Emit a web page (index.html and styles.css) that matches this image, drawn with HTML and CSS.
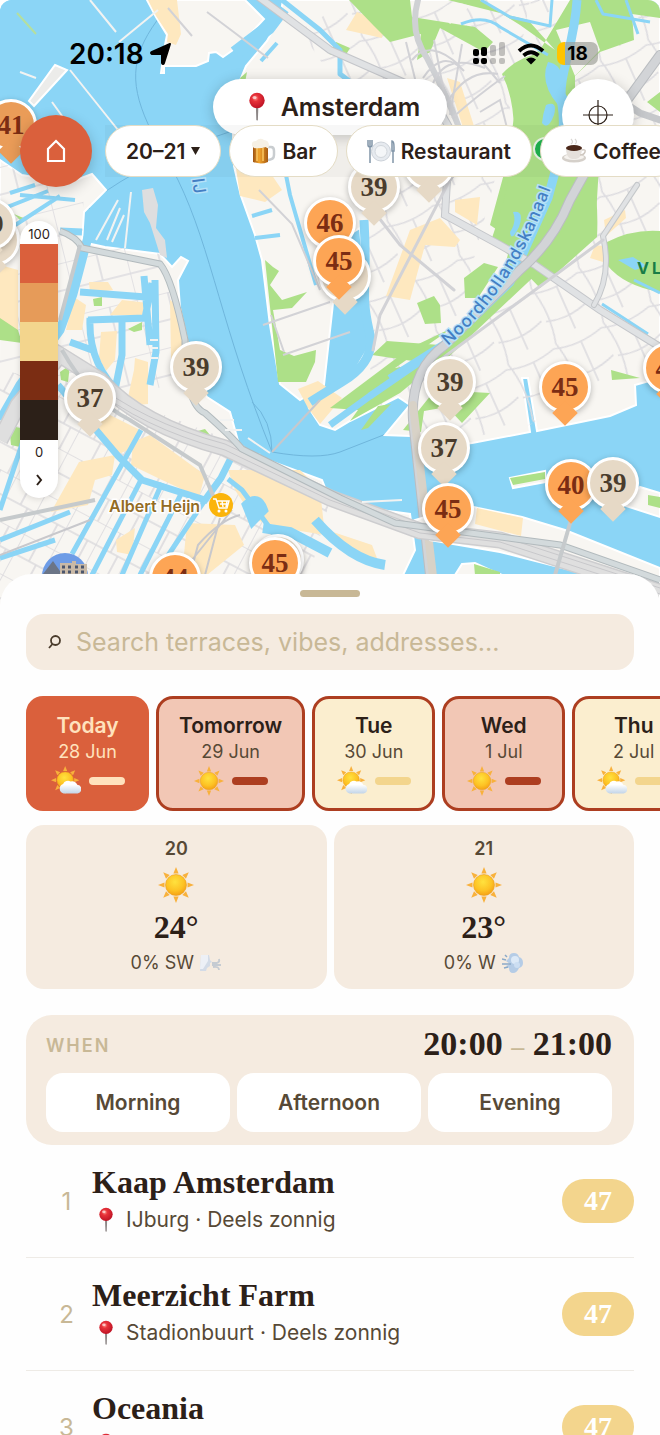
FILE: index.html
```html
<!DOCTYPE html>
<html lang="en">
<head>
<meta charset="utf-8">
<meta name="viewport" content="width=device-width, initial-scale=1">
<title>Terraces in Amsterdam</title>
<link rel="stylesheet" href="styles.css">
</head>
<body>
<svg class="defs" aria-hidden="true">
  <defs>
    <radialGradient id="sunFill" cx=".45" cy=".35" r=".7"><stop offset="0" stop-color="#ffe23e"/><stop offset=".6" stop-color="#fdc224"/><stop offset="1" stop-color="#f39a12"/></radialGradient>
    <linearGradient id="cloudFill" x1="0" y1="0" x2="0" y2="1"><stop offset=".3" stop-color="#fff"/><stop offset="1" stop-color="#c3d5e8"/></linearGradient>
    <radialGradient id="redFill" cx=".4" cy=".35" r=".7"><stop offset="0" stop-color="#ff9a90"/><stop offset=".3" stop-color="#e8333a"/><stop offset="1" stop-color="#b90f22"/></radialGradient>
    <linearGradient id="beerFill" x1="0" y1="0" x2="1" y2="0"><stop offset="0" stop-color="#9c5212"/><stop offset=".4" stop-color="#f3a52c"/><stop offset="1" stop-color="#a65a12"/></linearGradient>
    <symbol id="sun" viewBox="0 0 36 36">
      <g fill="#f8b13c"><path id="ray" d="M18 0l2.600 6.500h-5.200z"/><use href="#ray" transform="rotate(45 18 18)"/><use href="#ray" transform="rotate(90 18 18)"/><use href="#ray" transform="rotate(135 18 18)"/><use href="#ray" transform="rotate(180 18 18)"/><use href="#ray" transform="rotate(225 18 18)"/><use href="#ray" transform="rotate(270 18 18)"/><use href="#ray" transform="rotate(315 18 18)"/></g>
      <circle cx="18" cy="18" r="10.500" fill="url(#sunFill)" stroke="#eda01c" stroke-width=".6"/>
    </symbol>
    <symbol id="partly" viewBox="0 0 36 36">
      <use href="#sun" width="34" height="34"/>
      <path d="M15 33a6 6 0 0 1-.5-11.500 6.500 6.500 0 0 1 9-3 7 7 0 0 1 8 4 5.300 5.300 0 0 1 .5 10.500z" fill="url(#cloudFill)"/>
    </symbol>
    <symbol id="pushpin" viewBox="0 0 20 30">
      <path d="M8.800 13h2.600l-.5 14.500-.8 1.500-.8-1.500z" fill="#8d8787"/>
      <circle cx="10" cy="8.500" r="7.700" fill="url(#redFill)"/><ellipse cx="7.500" cy="5.500" rx="2" ry="1.500" fill="#fff" opacity=".6"/>
    </symbol>
  </defs>
</svg>
<div class="app">
  <section class="map" aria-label="Map of Amsterdam">
    <svg class="map-art" viewBox="0 0 660 610" preserveAspectRatio="xMidYMin slice" aria-hidden="true">
      <defs>
        <pattern id="blocksA" width="34" height="46" patternUnits="userSpaceOnUse" patternTransform="rotate(28)"><path d="M0 0v46M17 0v22M0 22h34M0 0h34M25 22v24" stroke="#dbdadd" stroke-width="1.600" fill="none"/></pattern>
        <pattern id="blocksB" width="52" height="60" patternUnits="userSpaceOnUse" patternTransform="rotate(-24)"><path d="M0 4Q24 12 52 4M4 0q8 30 0 60M28 8v46M4 36q24 8 52-4" stroke="#dddce0" stroke-width="1.600" fill="none"/></pattern>
        <pattern id="blocksC" width="60" height="54" patternUnits="userSpaceOnUse" patternTransform="rotate(-14)"><path d="M0 0h60M0 27h60M0 0v54M32 0v27" stroke="#dddce0" stroke-width="1.600" fill="none"/></pattern>
      </defs>
      <rect width="660" height="610" fill="#8bd5f6"/>
      <!-- shipping lanes -->
      <g fill="none" stroke="#6fb6dc" stroke-width="1"><path d="M162 14C132 52 128 80 148 124L178 180C212 250 222 330 272 452M235 130Q170 150 120 182T90 208M272 452Q318 460 340 452L386 434M252 402Q272 420 272 452"/></g>
      <!-- northern land -->
      <g fill="#f8f6f2" stroke="#fff" stroke-width="2">
        <path d="M147 0H245L264 19L240 45L223 57L216 52L209 53L208 61L196 66H164V73H161L165 45L167 35L156 17Z"/>
        <path d="M283 0H660V378L635 385L636 405L610 416L537 431L528 378H522L530 432L472 443L435 448L411 436L385 435L410 405L398 397L350 421L335 430L320 425L309 408L330 396L355 370L370 345L360 228L340 240L324 385L300 400L280 384L270 325L262 260L255 235L241 196L234 166L232 100L246 66L267 41L280 17Z"/>
      </g>
      <path d="M350 0H530L500 160L450 350L375 410L366 330L362 220L340 90L300 30Z" fill="url(#blocksB)"/>
      <path d="M530 0H660V375L600 380L530 425L470 438L435 448L400 395L500 290L560 200Z" fill="url(#blocksB)"/>
      <!-- beige quarters -->
      <g fill="#fee8bf"><path d="M148 0H177L181 34L176 45L167 42L168 34L156 16ZM346 30L357 12L385 23L382 38ZM236 168L265 165L282 190L265 202L240 196ZM447 78L460 82L480 145L467 140ZM455 200L480 197L477 225L455 212ZM410 230L440 218L460 240L455 247L425 245L410 300L386 296Z"/><path d="M298 389L318 381L342 398L320 424L308 408ZM595 245L603 246L603 262L590 258ZM604 220L625 210L626 218L606 236Z"/></g>
      <!-- parks -->
      <g fill="#ade088">
        <path d="M349 0H410L412 17L475 27L493 42L484 52L440 28L430 52L417 60L421 34L390 42L374 26Z"/>
        <path d="M448 0H660V18L632 14L634 40L600 52L575 76L575 100L600 150L596 215L560 252L440 365L372 355L387 341L440 345L498 290L512 240L490 225L505 170L518 95L505 73L540 50L570 0H480L520 25L555 50L528 20Z"/>
        <path d="M502 74Q530 45 555 60L580 130Q600 180 597 237L540 288L492 238Q530 130 502 74ZM607 242Q632 229 660 231V292Q624 286 607 265ZM647 102L660 92V112ZM464 278L484 263L498 267L478 298H465ZM417 303L434 296L440 305L441 323L425 324ZM336 42L350 48L344 58L329 54ZM240 78L247 72L244 88ZM265 260L273 267L279 271L270 285L282 300L307 292L292 308L273 310L280 350L294 356L316 350L315 362L306 382L278 382Z"/>
        <path d="M330 408L410 348L452 328L395 368L440 360L400 393L350 421L358 410ZM361 430L378 406L391 404L368 428ZM403 430L435 390L490 393L462 423L447 407L424 411L421 432ZM611 370L640 378L612 380Z"/>
      </g>
      <path d="M556 30L590 22L600 50L575 76ZM440 12Q450 -2 470 6L450 24Z" fill="#f8f6f2"/>
      <!-- northern canals and ponds -->
      <g fill="none" stroke="#8bd5f6" stroke-linejoin="round">
        <path d="M577 0C574 50 557 75 562 105S558 160 548 198L510 282L447 343L390 379" stroke-width="9"/>
        <path d="M447 343L370 396L330 425" stroke-width="7"/>
        <path d="M283 8L268 28L235 53" stroke-width="14"/><path d="M282 0L320 30L340 50V74L380 104" stroke-width="5"/>
        <path d="M364 220C368 290 360 290 369 330Q378 360 342 382L310 402" stroke-width="9"/>
        <path d="M261 61L277 43M282 155L290 195L316 285M252 216L272 210M255 238L280 235" stroke-width="4"/>
        <path d="M602 304L648 334M634 280L660 293M461 24Q485 14 500 27L548 55M481 0L510 17L550 26L552 0M596 0L603 14L650 22M626 0L638 34" stroke-width="3"/>
      </g>
      <path d="M548 62Q565 65 560 85L568 98L558 105Q539 82 548 62ZM546 105q12-5 8 10-6 16-12 8 1-10 4-18M513 212q12-2 6 15-8 16-9 5 7-10 3-20M618 260l15-3 14 9-12 4Z" fill="#8bd5f6"/>
      <!-- northern roads -->
      <g fill="none" stroke-linecap="round">
        <path d="M252 -8L330 50L430 94L465 155L447 180L445 215L500 245L535 265L600 310L660 347" stroke="#c4c6ca" stroke-width="8"/><path d="M252 -8L330 50L430 94L465 155L447 180L445 215L500 245L535 265L600 310L660 347" stroke="#e0e2e4" stroke-width="6"/>
        <path d="M418 0Q409 32 427 58Q448 98 460 130" stroke="#cfd1d4" stroke-width="6"/>
        <path d="M660 55L620 110L570 200Q553 242 520 270L445 345Q410 370 413 420L430 575" stroke="#babdc1" stroke-width="10"/><path d="M660 55L620 110L570 200Q553 242 520 270L445 345Q410 370 413 420L430 575" stroke="#d2d4d7" stroke-width="8"/>
        <path d="M413 405L434 585" stroke="#d8d2c7" stroke-width="8"/><path d="M660 120L640 113L617 98" stroke="#c6c8cb" stroke-width="7"/>
        <path d="M637 185L603 236Q612 275 594 305" stroke="#c4c7ca" stroke-width="6"/><path d="M637 185L603 236Q612 275 594 305" stroke="#e0e2e4" stroke-width="4"/>
        <path d="M603 240L535 290L440 360M455 170L380 315L373 350M365 200L400 245L454 290" stroke="#d2d2d6" stroke-width="3"/>
      </g>
      <g fill="none" stroke="#d2d2d6" stroke-width="2"><path d="M460 66Q430 38 412 60M464 71Q443 48 423 78M485 68Q440 50 430 93M498 74Q467 68 447 103M505 76Q478 95 452 118M406 42L417 87M434 40L445 98M462 44L450 115M475 54L500 83M480 112L500 100L513 152M207 12L235 33L268 58M168 8L192 36M259 190L292 224L320 290M263 325L330 302M283 355L350 332M271 315L284 352"/></g>
      <!-- western and central land -->
      <g fill="#f8f6f2" stroke="#fff" stroke-width="2">
        <path d="M0 160L22 175L68 183L92 174L106 190L84 212L82 242L105 247L160 254L172 267L181 257L188 261L178 280L180 308L192 374L207 397L230 412L240 448L262 458L322 480L326 490L345 505L410 514L415 550L403 575L396 612H-2Z"/>
        <path d="M465 505L478 508L522 517L565 530L660 568V610L590 575L500 552L430 540L415 520Z"/>
        <path d="M640 487L660 493V517L626 506ZM510 478L545 471L546 482L513 488ZM462 564L475 563L490 570L502 575H455Z"/>
        <path d="M55 65L67 70L34 106L29 101Z" fill="#ececea"/>
      </g>
      <path d="M0 160L22 175L84 185L82 242L160 254L192 374L130 400L0 370Z" fill="url(#blocksC)"/>
      <path d="M0 370L100 390L255 450L330 500L300 610H0Z" fill="url(#blocksA)"/>
      <path d="M477 508L523 518L521 536L475 524ZM0 265L18 270V340L0 335ZM89 282L108 282L113 290L90 293ZM74 297L86 305L82 330H66ZM101 332L117 331L115 360L106 371L99 358ZM122 300L148 303L142 315L110 315ZM170 300L181 308L191 352L171 360ZM135 358L148 362V404L126 406L134 370ZM92 426L110 415L140 430L130 449L117 455ZM133 442L150 435L205 475L199 497L162 480L131 465ZM79 462L115 455L112 475L95 480L88 505L51 512ZM116 540L135 528L132 555L117 552ZM187 523L235 525L244 545L207 575H182ZM228 470L300 470L320 490L325 535L294 530L255 520L235 490ZM330 531L372 545L380 566L340 549Z" fill="#fee8bf"/>
      <path d="M510 478L545 472V479L513 485ZM648 495L660 497V508L648 505ZM474 564L500 572V575H475ZM0 318L18 330L22 343L0 340ZM9 425L20 428V447L11 445ZM194 432L205 429L224 452L197 440ZM93 299L102 297V306L94 306ZM128 329L142 322V330L134 332ZM14 214L28 220L20 220ZM60 372L70 365L68 382L61 380Z" fill="#ade088"/>
      <path d="M142 190L153 188L158 205L156 228L165 240L167 258L160 255L150 223L144 212Z" fill="#dededf"/>
      <path d="M17 13L36 34" stroke="#b5df9e" stroke-width="2"/>
      <g fill="none" stroke="#8bd5f6">
        <path d="M88 237L73 294L60 330L20 385L0 420" stroke-width="9"/>
        <path d="M60 231L82 232M80 292L146 297M88 320L145 318L152 283M90 318Q88 365 122 395M122 320V355L113 400M155 280L156 352L150 385M70 342L92 350M144 276L150 345" stroke-width="7"/>
        <path d="M0 210L48 191M0 235L60 196M20 195L75 200M10 193L35 185" stroke-width="4"/>
        <path d="M58 385L118 456L142 480L205 500L221 478L235 450" stroke-width="7"/>
        <path d="M141 430L72 554M142 478L92 575M162 483L122 575M182 492L140 575M205 500L155 575M70 512L0 540M0 510L30 420M228 479L242 490L275 535L270 575M0 558L55 540" stroke-width="5"/>
        <path d="M247 505Q258 495 263 510L253 520ZM263 528L290 532L330 553M315 520Q350 560 385 565" stroke-width="10"/>
      </g>
      <g fill="none">
        <path d="M0 440Q8 425 18 405L60 355L100 380Q140 425 225 448L330 498L420 531L500 540L660 592" stroke="#cdcdcf" stroke-width="17"/>
        <path d="M0 440Q8 425 18 405L60 355L100 380Q140 425 225 448L330 498L420 531L500 540L660 592" stroke="#dfdfdf" stroke-width="14"/>
        <path d="M90 379Q140 421 225 444L330 494L420 527L500 536L660 588M90 385Q140 427 225 450L330 500L420 533L500 542L660 594" stroke="#c8c8cb" stroke-width="1"/>
        <path d="M60 231Q77 237 82 248L160 264Q172 278 185 340Q185 405 205 413Q230 435 242 449L340 498L395 523L560 545L660 580" stroke="#b2babd" stroke-width="7"/><path d="M60 231Q77 237 82 248L160 264Q172 278 185 340Q185 405 205 413Q230 435 242 449L340 498L395 523L560 545L660 580" stroke="#d3dadc" stroke-width="5"/>
        <path d="M80 245L60 320M62 350Q90 400 130 420L200 465L215 500M0 520L95 500M571 520L555 575" stroke="#c6cacc" stroke-width="4"/>
        <path d="M272 452L320 400M180 575L232 510M240 515Q220 520 198 545L190 575M220 518L205 575M0 555L90 520" stroke="#c8c8cc" stroke-width="2"/>
        <path d="M90 0L116 32M158 10L119 42M70 70L118 130M20 72L36 78M52 102L65 120M96 240L118 200M107 240L120 208M112 242L124 215M125 248L131 192M150 340h8M150 348h8M150 358h8M220 420H234M225 430H242M248 438L270 453M362 502L402 500" stroke="#f2f3f2" stroke-width="2"/>
      </g>
      <path id="canalPath" d="M448 346Q514 290 551 188" fill="none"/>
      <text class="map-water-label"><textPath href="#canalPath">Noordhollandskanaal</textPath></text>
      <text class="map-water-label" transform="translate(192 179) rotate(82)">IJ</text>
      <text class="map-park-label" x="637" y="274">VL</text>
      <text class="map-shop-label" x="109" y="512">Albert Heijn</text>
      <circle cx="221" cy="505" r="12" fill="#fbb40b"/><path d="M213 499h3l3 9h8l2-7h-12m3 3h8m-6-3 1 6m4-6-1 6" fill="none" stroke="#fff" stroke-width="1.400"/><circle cx="219" cy="511" r="1.500" fill="#fff"/><circle cx="226" cy="511" r="1.500" fill="#fff"/>
      <circle cx="545" cy="149" r="11" fill="#1fb14e" stroke="#e8f3e4" stroke-width="2"/>
      <g><circle cx="65" cy="576" r="23" fill="#6e9ce6"/><path d="M43 574l10-13 9 13v12H43z" fill="#6b7587"/><path d="M60 563h12v-2h4v3h11v20H60z" fill="#c9b9a6"/><path d="M62 567h3m3 0h3m4 0h3m3 0h3M62 572h3m3 0h3m4 0h3m3 0h3" stroke="#4b566d" stroke-width="3"/></g>
    </svg>

    <button class="pin low" style="left:429px;top:164px"></button>
    <button class="pin low" style="left:374px;top:187px">39</button>
    <button class="pin low" style="left:345px;top:276px"></button>
    <button class="pin" style="left:330px;top:223px">46</button>
    <button class="pin" style="left:339px;top:261px">45</button>
    <button class="pin dim" style="left:11px;top:125px">41</button>
    <button class="pin low" style="left:-6px;top:240px"></button>
    <button class="pin low" style="left:-10px;top:224px">39</button>
    <button class="pin low" style="left:196px;top:367px">39</button>
    <button class="pin low" style="left:90px;top:398px">37</button>
    <button class="pin low" style="left:450px;top:382px">39</button>
    <button class="pin" style="left:565px;top:387px">45</button>
    <button class="pin" style="left:669px;top:368px">45</button>
    <button class="pin low" style="left:444px;top:448px">37</button>
    <button class="pin" style="left:448px;top:509px">45</button>
    <button class="pin" style="left:571px;top:485px">40</button>
    <button class="pin low" style="left:613px;top:483px">39</button>
    <button class="pin low" style="left:278px;top:560px"></button>
    <button class="pin" style="left:275px;top:563px">45</button>
    <button class="pin" style="left:175px;top:578px">44</button>

    <div class="overlay">
      <div class="status">
        <span class="clock">20:18 <svg width="22" height="22" viewBox="0 0 22 22" aria-hidden="true"><path d="M20 1L14 20Q13 22 12 20V11H2Q0 10 2 9Z" stroke="#000" stroke-width="2" stroke-linejoin="round"/></svg></span>
        <span class="signals">
          <svg width="33" height="23" viewBox="0 0 33 23" aria-hidden="true"><g><rect x="1" y="7" width="6" height="7" rx="2"/><rect x="9" y="5" width="6" height="9" rx="2"/><rect x="1" y="16" width="6" height="6" rx="2"/><rect x="9" y="16" width="6" height="6" rx="2"/></g><g opacity=".22"><rect x="18" y="3" width="6" height="11" rx="2"/><rect x="27" y="0" width="6" height="14" rx="2"/><rect x="18" y="16" width="6" height="6" rx="2"/><rect x="27" y="16" width="6" height="6" rx="2"/></g></svg>
          <svg width="28" height="22" viewBox="0 0 28 22" aria-hidden="true"><path d="M2 8Q14-3 26 8M6.500 12.500Q14 6 21.500 12.500" fill="none" stroke="#000" stroke-width="3.800"/><path d="M9 16.500Q14 12.500 19 16.500L14 21.500Z"/></svg>
          <span class="battery">18</span>
        </span>
      </div>
      <div class="place-row">
        <button class="place"><svg width="20" height="30" aria-hidden="true"><use href="#pushpin"/></svg>Amsterdam</button>
        <button class="locate" aria-label="Locate me"><svg width="30" height="30" viewBox="0 0 30 30" fill="none" stroke="#2c2018" stroke-width="1.200"><circle cx="15" cy="15" r="9"/><path d="M15 0v30M0 15h30"/></svg></button>
      </div>
      <div class="filters">
        <button class="home" aria-label="Home"><svg width="20" height="24" viewBox="0 0 20 24" fill="none" stroke="#fff" stroke-width="2.200"><path d="M2 22V10L10 2l8 8v12z"/></svg></button>
        <div class="chips">
          <button class="chip">20–21 <svg width="9" height="10" viewBox="0 0 9 10" aria-hidden="true"><path d="M0 1h9L4.500 9z" fill="#2c2018"/></svg></button>
          <button class="chip"><svg width="26" height="27" viewBox="0 0 24 27" aria-hidden="true"><path d="M16 9h4q3 0 3 4v4q0 5-7 5" fill="none" stroke="#c9cdd0" stroke-width="2.500"/><path d="M2 7h15v17q-7 3-15 0z" fill="url(#beerFill)"/><path d="M6 10v13M12 10v13" stroke="#fbc762" stroke-width="1.500"/><path d="M1 8Q0 3 5 3 9-1 13 2q5 0 5 6-1 4-3 1-6 2-12 1z" fill="#f6f0e4"/></svg>Bar</button>
          <button class="chip"><svg width="28" height="25" viewBox="0 0 28 25" aria-hidden="true"><circle cx="14" cy="12.500" r="9.500" fill="#e6eaef" stroke="#ccd2d9"/><circle cx="14" cy="12.500" r="6" fill="#f4f6f8" stroke="#d2d7dc"/><path d="M1 1v5q0 2 2 2t2-2V1M3 1v23M25 12V2q2 0 2 6v4zM26 12v12" fill="none" stroke="#8195a8" stroke-width="1.500"/></svg>Restaurant</button>
          <button class="chip"><svg width="26" height="26" viewBox="0 0 26 26" aria-hidden="true"><ellipse cx="13" cy="20" rx="12" ry="4.500" fill="#d5d0ca"/><ellipse cx="13" cy="19" rx="10" ry="3" fill="#f5f2ee"/><path d="M5 10h16q0 10-6 11h-4Q5 20 5 10z" fill="#e5e0db"/><path d="M21 12q4-1 3 2t-5 3" fill="none" stroke="#cfc8c0" stroke-width="1.500"/><ellipse cx="13" cy="10" rx="8" ry="3" fill="#4b281a"/><path d="M10 6q3-2 0-5M14 6q3-2 0-5" fill="none" stroke="#dad7d4" stroke-width="1.200"/></svg>Coffee</button>
        </div>
      </div>
      <button class="legend" aria-label="Sun score scale">
        <span class="legend-label">100</span>
        <span class="band band-5"></span><span class="band band-4"></span><span class="band band-3"></span><span class="band band-2"></span><span class="band band-1"></span>
        <span class="legend-label">0</span>
        <svg width="8" height="12" viewBox="0 0 8 12" fill="none" stroke="#2c2018" stroke-width="2"><path d="M2 1l4 5-4 5"/></svg>
      </button>
    </div>
  </section>

  <main class="sheet">
    <div class="handle"></div>
    <label class="search">
      <svg width="13" height="14" viewBox="0 0 13 14" fill="none" stroke="#4a3c2c" stroke-width="1.800"><circle cx="7.500" cy="5.500" r="4.500"/><path d="M4.500 9L1 13"/></svg>
      <input type="search" aria-label="Search" placeholder="Search terraces, vibes, addresses...">
    </label>
    <div class="days">
      <button class="day today"><strong>Today</strong><span>28 Jun</span><span class="sky"><svg width="30" height="30"><use href="#partly"/></svg><i></i></span></button>
      <button class="day sunny"><strong>Tomorrow</strong><span>29 Jun</span><span class="sky"><svg width="30" height="30"><use href="#sun"/></svg><i></i></span></button>
      <button class="day mild"><strong>Tue</strong><span>30 Jun</span><span class="sky"><svg width="30" height="30"><use href="#partly"/></svg><i></i></span></button>
      <button class="day sunny"><strong>Wed</strong><span>1 Jul</span><span class="sky"><svg width="30" height="30"><use href="#sun"/></svg><i></i></span></button>
      <button class="day mild"><strong>Thu</strong><span>2 Jul</span><span class="sky"><svg width="30" height="30"><use href="#partly"/></svg><i></i></span></button>
    </div>
    <div class="hours">
      <div class="hour"><b>20</b><svg width="36" height="36"><use href="#sun"/></svg><strong>24°</strong><span class="wind">0% SW <svg width="22" height="18" viewBox="0 0 22 18"><path d="M1 1h8l1 5 2 2-2 1v3l-3 2-1 3H0z" fill="#d3dbe7"/><path d="M1 1h7v6L3 15H0z" fill="#edf0f6"/><path d="M12 9h5q3-1 2-4M12 11h9M13 13q6-1 6 3" fill="none" stroke="#c5cbd2" stroke-width="1.800"/></svg></span></div>
      <div class="hour"><b>21</b><svg width="36" height="36"><use href="#sun"/></svg><strong>23°</strong><span class="wind">0% W <svg width="22" height="22" viewBox="0 0 22 22"><path d="M7 6Q7 1 12 1q4 0 5 4 4 1 4 6 0 4-4 5-2 5-6 5t-4-5l-3-2 4-2-4-3z" fill="#b5cce6"/><circle cx="13" cy="8" r="4" fill="#dce9f7"/><circle cx="15" cy="13" r="3" fill="#ccdef2"/><path d="M0 7l4 1M0 12h9M3 3l2 2M2 16l4-1" stroke="#8aa9c8" stroke-width="1.500"/></svg></span></div>
    </div>
    <section class="when">
      <header><h2>WHEN</h2><p>20:00 <em>–</em> 21:00</p></header>
      <div class="parts"><button>Morning</button><button>Afternoon</button><button>Evening</button></div>
    </section>
    <ol class="venues">
      <li><span class="rank">1</span><div><h3>Kaap Amsterdam</h3><p><svg width="18" height="26" viewBox="0 0 20 30"><use href="#pushpin"/></svg>IJburg · Deels zonnig</p></div><span class="score">47</span></li>
      <li><span class="rank">2</span><div><h3>Meerzicht Farm</h3><p><svg width="18" height="26" viewBox="0 0 20 30"><use href="#pushpin"/></svg>Stadionbuurt · Deels zonnig</p></div><span class="score">47</span></li>
      <li><span class="rank">3</span><div><h3>Oceania</h3><p><svg width="18" height="26" viewBox="0 0 20 30"><use href="#pushpin"/></svg></p></div><span class="score">47</span></li>
    </ol>
  </main>
</div>
</body>
</html>
```
FILE: styles.css
```css
* { box-sizing: border-box; }
body { margin: 0; background: #fff; color: #2c2018; font-family: Inter, "Liberation Sans", sans-serif; }
button { font: inherit; color: inherit; border: 0; padding: 0; cursor: pointer; }
h2, h3, p, ol { margin: 0; padding: 0; }
svg { flex: none; }
.defs { position: absolute; width: 0; height: 0; }
.app { height: 100vh; display: flex; flex-direction: column; overflow: hidden; border-radius: 12px 12px 0 0; }

.map { position: relative; flex: none; overflow: hidden; padding-bottom: 108px; background: #8bd5f6; }
.map-art { position: absolute; inset: 0; width: 100%; height: 100%; }
.map-water-label { font-size: 17px; font-weight: 500; letter-spacing: 1px; fill: #437fc4; stroke: #b5e1f8; stroke-width: 3px; paint-order: stroke; }
.map-park-label { font-size: 16px; font-weight: 700; letter-spacing: 3px; fill: #197c46; }
.map-shop-label { font-size: 16px; font-weight: 600; fill: #936c24; stroke: #fff; stroke-width: 3px; paint-order: stroke; }

.pin { position: absolute; width: 52px; height: 52px; margin: -26px 0 0 -26px; border: 3px solid #fff; border-radius: 50%; background: #fda555; color: #7b2d13; font: bold 27px/46px "Liberation Serif", serif; box-shadow: 0 2px 6px #0004; isolation: isolate; }
.pin::after { content: ""; position: absolute; z-index: -1; left: 14px; top: 40px; width: 18px; height: 18px; background: inherit; transform: rotate(45deg); }
.pin.low { background: #e6d9c6; color: #4a3c2c; }
.pin.dim { background: #ea9c58; }

.overlay { position: relative; pointer-events: none; }
.overlay button { pointer-events: auto; }
.status { height: 79px; padding: 28px 62px 0 69px; display: flex; align-items: center; justify-content: space-between; color: #000; }
.clock { display: flex; align-items: center; gap: 6px; font-size: 28px; font-weight: 600; }
.signals { display: flex; align-items: center; gap: 12px; }
.battery { width: 41px; height: 23px; border-radius: 7px; background: linear-gradient(90deg, #ffc400 8px, #9b9d96aa 8px); font-size: 19px; font-weight: 700; line-height: 23px; text-align: center; }
.place-row { display: grid; grid-template-columns: 1fr auto 1fr; align-items: start; padding: 0 26px; height: 56px; }
.place { grid-column: 2; display: flex; align-items: center; gap: 14px; height: 56px; padding: 0 27px 0 34px; border-radius: 28px; background: #fff; font-size: 25px; font-weight: 600; box-shadow: 0 2px 14px #0003; }
.locate { justify-self: end; width: 72px; height: 72px; border-radius: 50%; background: #fff; display: grid; place-items: center; box-shadow: 0 2px 14px #0003; }
.filters { position: relative; display: flex; align-items: center; gap: 13px; margin-top: -20px; padding-left: 20px; }
.home { flex: none; width: 72px; height: 72px; border-radius: 50%; background: #da603c; display: grid; place-items: center; box-shadow: 0 4px 14px #0003; }
.chips { flex: 1; min-width: 0; display: flex; gap: 8px; overflow: hidden; background: #00000008; }
.chip { flex: none; height: 52px; padding: 0 20px; display: flex; align-items: center; gap: 6px; border: 1px solid #e4dcc5; border-radius: 26px; background: #fff; font-size: 21px; font-weight: 600; }
.legend { width: 38px; margin: 34px 0 0 20px; padding: 4px 0 12px; display: flex; flex-direction: column; align-items: center; border-radius: 19px; background: #fff; font-size: 13px; box-shadow: 0 1px 6px #0002; }
.legend-label { line-height: 19px; }
.legend > svg { margin-top: 12px; }
.band { width: 100%; height: 39px; }
.band-5 { background: #da603c; }
.band-4 { background: #e69b59; }
.band-3 { background: #f3d58d; }
.band-2 { background: #7b2d13; }
.band-1 { height: 40px; margin-bottom: 3px; background: #2c2018; }

.sheet { position: relative; flex: 1; min-height: 0; overflow: hidden; margin-top: -32px; padding: 16px 26px 0; border-radius: 32px 32px 0 0; background: #fefefe; }
.handle { width: 60px; height: 7px; margin: 0 auto 17px; border-radius: 4px; background: #c8b896; }
.search { display: flex; align-items: center; gap: 15px; height: 56px; padding: 0 22px; border-radius: 18px; background: #f5ebe0; }
.search input { flex: 1; min-width: 0; padding: 0; border: 0; outline: 0; background: none; font: 400 25px/32px Inter, sans-serif; color: #2c2018; }
.search input::placeholder { color: #c8b896; opacity: 1; }
.days { display: flex; gap: 7px; margin: 26px -26px 14px 0; overflow: hidden; }
.day { flex: none; min-width: 123px; height: 115px; padding: 2px 20px 0; display: flex; flex-direction: column; align-items: center; justify-content: center; border: 3px solid #ad3e20; border-radius: 17px; color: #574936; font-size: 18px; line-height: 26px; }
.day strong { color: #2c2018; font-size: 21px; font-weight: 600; }
.sky { display: flex; align-items: center; gap: 8px; height: 32px; }
.sky i { width: 36px; height: 8px; border-radius: 4px; background: #ad3e20; }
.sunny { background: #f2c7b5; }
.mild { background: #fbeecf; }
.mild i { background: #f3d58d; }
.day.today { border-color: #da603c; background: #da603c; color: #ffe2bd; }
.today strong { color: #ffe2bd; }
.today i { background: #ffe2bd; }
.hours { display: grid; grid-template-columns: 1fr 1fr; gap: 7px; }
.hour { height: 164px; padding-top: 12px; display: flex; flex-direction: column; align-items: center; border-radius: 18px; background: #f5ebe0; color: #574936; font-size: 18px; line-height: 24px; }
.hour b { font-weight: 600; margin-bottom: 6px; }
.hour strong { margin: 6px 0; color: #2c2018; font: bold 32px/36px "Liberation Serif", serif; }
.wind { display: flex; align-items: center; gap: 6px; }
.when { margin-top: 26px; padding: 12px 22px 13px 20px; border-radius: 26px; background: #f5ebe0; }
.when header { display: flex; align-items: center; justify-content: space-between; height: 36px; margin-bottom: 10px; }
.when h2 { color: #c8b896; font-size: 18px; font-weight: 600; letter-spacing: 2px; }
.when p { font: bold 34px/36px "Liberation Serif", serif; }
.when em { color: #c8b896; font-style: normal; font-size: 26px; }
.parts { display: grid; grid-template-columns: repeat(3, 1fr); gap: 7px; }
.parts button { height: 59px; border-radius: 17px; background: #fff; color: #574936; font-size: 21px; font-weight: 600; }
.venues { list-style: none; }
.venues li { display: flex; align-items: center; height: 113px; border-bottom: 1px solid #eeebe6; }
.rank { flex: none; width: 66px; padding-left: 15px; color: #c8b896; font-size: 24px; text-align: center; }
.venues div { flex: 1; }
.venues h3 { font: bold 32px/38px "Liberation Serif", serif; }
.venues p { display: flex; align-items: center; gap: 11px; min-height: 38px; padding-left: 5px; color: #574936; font-size: 21px; line-height: 38px; }
.score { width: 72px; height: 44px; border-radius: 22px; background: #f3d58d; color: #fff; font: bold 28px/44px "Liberation Serif", serif; text-align: center; }
```
